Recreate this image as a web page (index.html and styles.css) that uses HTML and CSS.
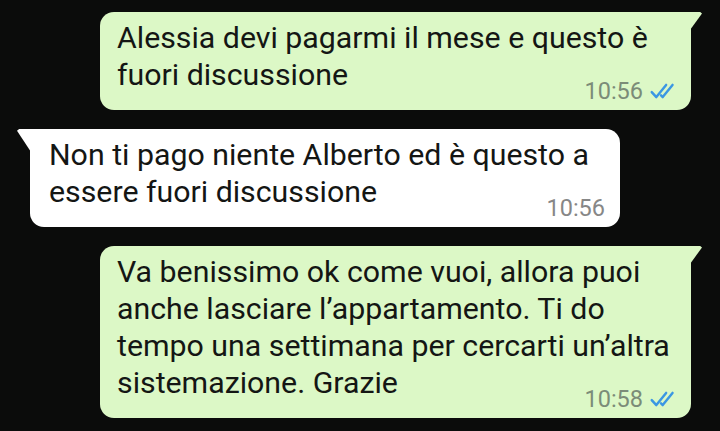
FILE: index.html
```html
<!DOCTYPE html>
<html lang="it">
<head>
  <meta charset="UTF-8" />
  <meta name="viewport" content="width=device-width, initial-scale=1.0"/>
  <title>Chat</title>
  <link rel="stylesheet" href="styles.css">
</head>
<body>

<div class="chat">
  <div class="bubble out">
    <div class="text">Alessia devi pagarmi il mese e questo è<br>fuori discussione</div>
    <div class="meta">
      <span class="time">10:56</span>
      <svg class="ticks" viewBox="0 0 26 15" width="28" height="16">
        <path d="M1.5 8.5 L5.8 13.2 L15 1.8" />
        <path d="M10.2 11.6 L11.8 13.2 L21 1.8" />
      </svg>
    </div>
  </div>

  <div class="bubble in">
    <div class="text">Non ti pago niente Alberto ed è questo a<br>essere fuori discussione</div>
    <div class="meta">
      <span class="time">10:56</span>
    </div>
  </div>

  <div class="bubble out">
    <div class="text">Va benissimo ok come vuoi, allora puoi<br>anche lasciare l’appartamento. Ti do<br>tempo una settimana per cercarti un’altra<br>sistemazione. Grazie</div>
    <div class="meta">
      <span class="time">10:58</span>
      <svg class="ticks" viewBox="0 0 26 15" width="28" height="16">
        <path d="M1.5 8.5 L5.8 13.2 L15 1.8" />
        <path d="M10.2 11.6 L11.8 13.2 L21 1.8" />
      </svg>
    </div>
  </div>
</div>

</body>
</html>
```

FILE: styles.css
```css
body {
  margin: 0;
  padding: 0;
  background: #0b0c0b;
  font-family: Roboto, "Noto Sans", Arial, sans-serif;
  height: 431px;
  overflow: hidden;
}

.chat {
  display: flex;
  flex-direction: column;
  gap: 19px;
  padding: 12px 29px 0 30px;
}

.bubble {
  position: relative;
  box-sizing: border-box;
  border-radius: 14px;
  padding: 7px 11px 7px 17px;
  color: #141614;
}

.bubble.out {
  align-self: flex-end;
  width: 591px;
  background: #dcf8c6;
  border-top-right-radius: 0;
}

.bubble.in {
  align-self: flex-start;
  width: 590px;
  background: #ffffff;
  border-top-left-radius: 0;
  padding-left: 19px;
  padding-right: 15px;
}

/* little tails on the top corners */
.bubble.out::after {
  content: "";
  position: absolute;
  top: 0;
  right: -11px;
  width: 12px;
  height: 18px;
  background: #dcf8c6;
  clip-path: polygon(0 0, 85% 0, 100% 8%, 0 100%);
}

.bubble.in::after {
  content: "";
  position: absolute;
  top: 0;
  left: -13px;
  width: 14px;
  height: 23px;
  background: #ffffff;
  clip-path: polygon(15% 0, 100% 0, 100% 100%, 0 8%);
}

.text {
  font-size: 30.3px;
  line-height: 37px;
}

.meta {
  display: flex;
  justify-content: flex-end;
  align-items: center;
  gap: 7px;
  margin-top: -14px;
  height: 24px;
}

.time {
  font-size: 23.5px;
  line-height: 24px;
  color: #7b8c78;
}

.bubble.in .time {
  color: #878787;
}

.ticks {
  fill: none;
  stroke: #3b97e3;
  stroke-width: 2.3;
  stroke-linecap: round;
  stroke-linejoin: round;
  margin-right: 2px;
}
```
